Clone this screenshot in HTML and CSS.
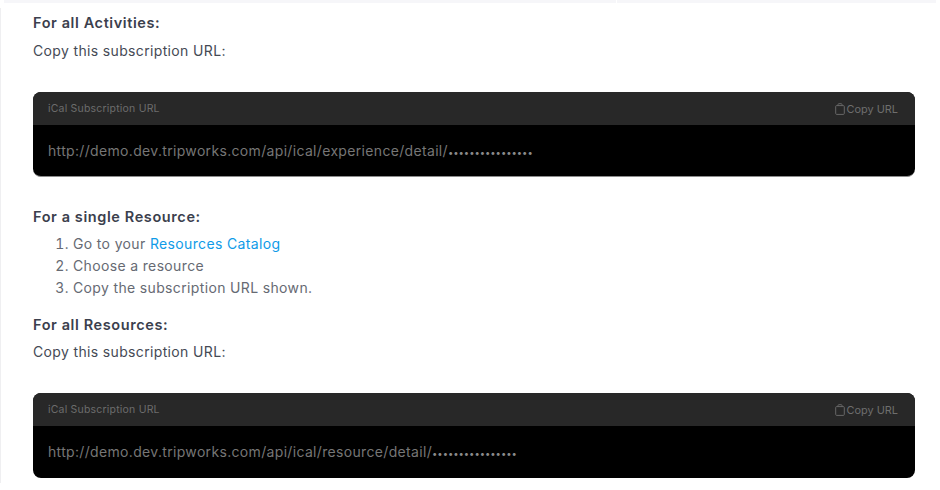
FILE: index.html
```html
<!DOCTYPE html>
<html lang="en">
<head>
<meta charset="utf-8">
<title>iCal Subscription</title>
<link rel="stylesheet" href="styles.css">
</head>
<body>
<div class="topbar"><span class="seg seg-left"></span><span class="seg seg-right"></span></div>
<main class="panel">
  <h4 class="heading first">For all Activities:</h4>
  <p class="copy">Copy this subscription URL:</p>
  <section class="code edge">
    <header class="code-head">
      <span class="code-label">iCal Subscription URL</span>
      <span class="code-action">
        <svg class="clip" viewBox="0 0 10 12" aria-hidden="true"><path d="M1.6 2.600h6.800a.9.900 0 0 1 .9.900v6.900a1 1 0 0 1-1 1H1.700a1 1 0 0 1-1-1V3.500a.9.900 0 0 1 .9-.9zM3 2.600V1.500a.8.800 0 0 1 .8-.8h2.400a.8.800 0 0 1 .8.800v1.100" fill="none" stroke="currentColor" stroke-width=".9"/></svg>
        Copy URL
      </span>
    </header>
    <div class="code-body">http://demo.dev.tripworks.com/api/ical/experience/detail/<span class="dots">••••••••••••••••</span></div>
  </section>
  <h4 class="heading single">For a single Resource:</h4>
  <ol class="steps">
    <li>Go to your <a href="#">Resources Catalog</a></li>
    <li>Choose a resource</li>
    <li>Copy the subscription URL shown.</li>
  </ol>
  <h4 class="heading all">For all Resources:</h4>
  <p class="copy tight">Copy this subscription URL:</p>
  <section class="code">
    <header class="code-head">
      <span class="code-label">iCal Subscription URL</span>
      <span class="code-action">
        <svg class="clip" viewBox="0 0 10 12" aria-hidden="true"><path d="M1.6 2.600h6.800a.9.900 0 0 1 .9.900v6.900a1 1 0 0 1-1 1H1.700a1 1 0 0 1-1-1V3.500a.9.900 0 0 1 .9-.9zM3 2.600V1.500a.8.800 0 0 1 .8-.8h2.400a.8.800 0 0 1 .8.800v1.100" fill="none" stroke="currentColor" stroke-width=".9"/></svg>
        Copy URL
      </span>
    </header>
    <div class="code-body">http://demo.dev.tripworks.com/api/ical/resource/detail/<span class="dots">••••••••••••••••</span></div>
  </section>
</main>
</body>
</html>
```
FILE: styles.css
```css
* { box-sizing: border-box; }
html, body { margin: 0; height: 100%; background: #fff; overflow: hidden; }
body { font-family: "Inter", "Liberation Sans", sans-serif; color: #3d4350; }
.topbar { height: 3px; margin: 0 4px; display: flex; gap: 1px; }
.seg { display: block; background: #f6f6f9; }
.seg-left { width: 612px; }
.seg-right { flex: 1; }
.panel { height: 475px; margin-top: 5px; padding: 4px 25px 0 32px; border-left: 1px solid #efeff1; }
.heading { margin: 0; font-size: 14.5px; line-height: 22px; font-weight: 600; color: #3b404d; letter-spacing: .6px; }
.copy { margin: 6px 0 0; font-size: 14px; line-height: 22px; color: #454a55; letter-spacing: .35px; }
.tight { margin-top: 5px; }
.code { margin-top: 30px; height: 85px; border-radius: 8px; overflow: hidden; background: #000; }
.edge { border-bottom: 1px solid #8c8c8c; }
.code-head { height: 33px; padding: 0 17px 0 15px; display: flex; align-items: center; justify-content: space-between; background: #282828; color: #6c6c6c; font-size: 10.5px; letter-spacing: .2px; }
.code-action { display: flex; align-items: center; gap: 2px; color: #6e6e6e; font-size: 10.9px; letter-spacing: 0; }
.clip { display: block; width: 10px; height: 12px; }
.code-body { padding: 16px 15px 0; font-size: 14px; line-height: 20px; color: #767676; letter-spacing: .33px; }
.dots { font-size: 9.5px; letter-spacing: -.05px; color: #8a8a8a; }
.single { margin-top: 29px; }
.steps { margin: 5px 0 0; padding: 0 0 0 40px; font-size: 14px; line-height: 22px; color: #666a73; letter-spacing: .35px; }
.steps a { color: #0f9be8; text-decoration: none; }
.all { margin-top: 15px; }
```
